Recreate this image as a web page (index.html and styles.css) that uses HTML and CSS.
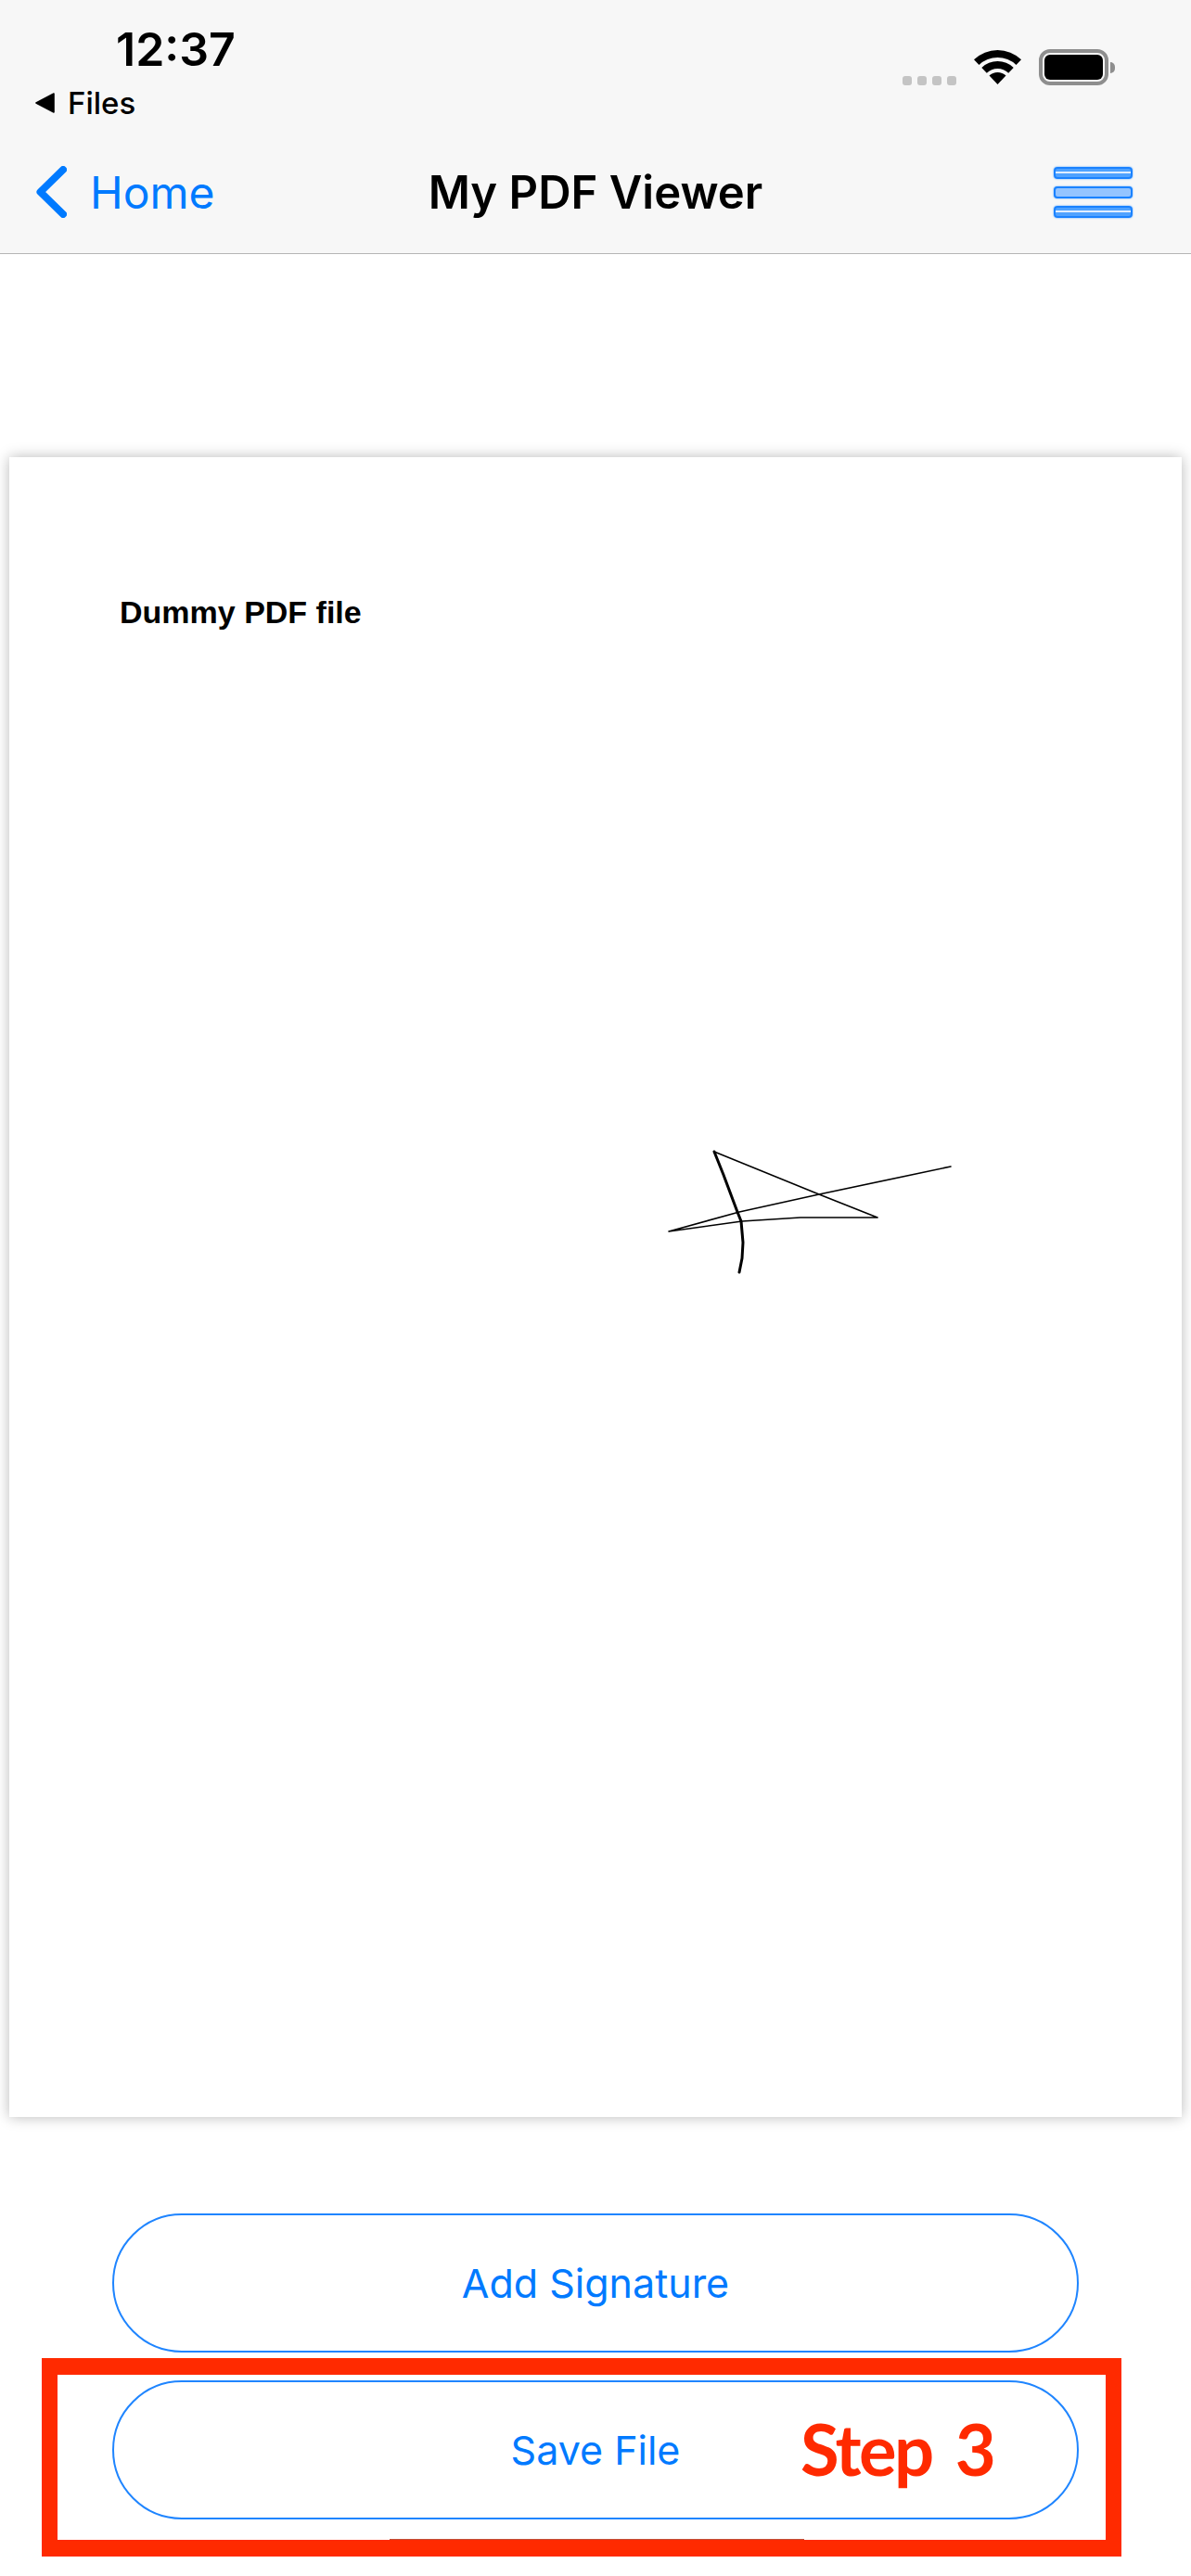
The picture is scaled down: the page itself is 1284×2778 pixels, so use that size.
FILE: index.html
```html
<!DOCTYPE html>
<html lang="en">
<head>
    <meta charset="UTF-8">
    <meta name="viewport" content="width=device-width, initial-scale=1.0">
    <title>My PDF Viewer</title>
    <link rel="stylesheet" href="styles.css">
</head>
<body>
    <header class="header">
        <div class="status">
            <div class="status-left">
                <div class="time">12:37</div>
                <div class="back-app">
                    <svg class="back-arrow" viewBox="0 0 22 22" width="22" height="22"><path d="M20 1 L1 11 L20 21 Z" fill="#000" stroke="#000" stroke-width="1.6" stroke-linejoin="round"/></svg>
                    <span>Files</span>
                </div>
            </div>
            <div class="status-right">
                <div class="signal">
                    <span class="dot"></span><span class="dot"></span><span class="dot"></span><span class="dot"></span>
                </div>
                <svg class="wifi" viewBox="0 0 51 37" width="51" height="37">
                    <path d="M0 10.2 A37 37 0 0 1 51 10.2 L45.5 16 A29 29 0 0 0 5.5 16 Z" fill="#000"/>
                    <path d="M8.3 18.9 A25 25 0 0 1 42.7 18.9 L37.2 24.7 A17 17 0 0 0 13.8 24.7 Z" fill="#000"/>
                    <path d="M16.5 27.6 A13 13 0 0 1 34.5 27.6 L25.5 37 Z" fill="#000"/>
                </svg>
                <div class="battery"><div class="battery-fill"></div></div>
                <div class="battery-nub"></div>
            </div>
        </div>
        <nav class="nav">
            <a class="nav-back">
                <svg class="chevron" viewBox="0 0 33 56" width="33" height="56"><path d="M29 4 L4.5 28 L29 52" fill="none" stroke="#007aff" stroke-width="8" stroke-linecap="round" stroke-linejoin="round"/></svg>
                <span>Home</span>
            </a>
            <h1 class="nav-title">My PDF Viewer</h1>
            <div class="menu">
                <div class="menu-bar menu-bar-light"></div>
                <div class="menu-bar"></div>
                <div class="menu-bar menu-bar-light"></div>
            </div>
        </nav>
    </header>

    <main class="content">
        <div class="pdf-page">
            <p class="pdf-text">Dummy PDF file</p>
            <svg class="signature" viewBox="0 0 320 150" width="320" height="150">
                <!-- thick downward stroke -->
                <path d="M50 2 L60 27 L75 67 L79 77 L81 100 L80 117 L77 132" fill="none" stroke="#000" stroke-width="3" stroke-linecap="round" stroke-linejoin="round"/>
                <!-- thin stroke around the triangle and the long line -->
                <path d="M50 2 L163 48 L226 73 L143 73 L80 77 L1 88 L77 67 L163 48 L305 18" fill="none" stroke="#000" stroke-width="1.6" stroke-linecap="round" stroke-linejoin="round"/>
            </svg>
        </div>

        <div class="actions">
            <button class="action-btn" type="button">Add Signature</button>
            <button class="action-btn" type="button">Save File</button>
            <div class="step-box"></div>
            <div class="step-label">Step 3</div>
        </div>
    </main>
</body>
</html>
```

FILE: styles.css
```css
html, body {
    margin: 0;
    padding: 0;
}
body {
    width: 1284px;
    height: 2778px;
    overflow: hidden;
    background-color: white;
    font-family: Inter, "Noto Sans", sans-serif;
}

/* header */
.header {
    height: 273px;
    background-color: #f7f7f7;
    border-bottom: 1px solid #b4b4b4;
}
.status {
    display: flex;
    justify-content: space-between;
    height: 157px;
    padding: 0 82px 0 38px;
}
.time {
    margin-top: 23px;
    padding-left: 87px;
    font-size: 50px;
    font-weight: 600;
    line-height: 60px;
    color: black;
}
.back-app {
    display: flex;
    align-items: center;
    gap: 13px;
    margin-top: 8px;
    font-size: 33px;
    font-weight: 500;
    line-height: 40px;
    color: black;
}
.status-right {
    display: flex;
    align-items: center;
    height: 39px;
    margin-top: 53px;
}
.signal {
    display: flex;
    gap: 6px;
    margin-top: 28px;
    margin-right: 19px;
}
.dot {
    width: 10px;
    height: 10px;
    border-radius: 3px;
    background-color: #c4c4c4;
}
.wifi {
    margin-right: 19px;
}
.battery {
    box-sizing: border-box;
    width: 75px;
    height: 39px;
    padding: 2px;
    border: 4px solid #8e8e8e;
    border-radius: 12px;
}
.battery-fill {
    height: 100%;
    border-radius: 6px;
    background-color: black;
}
.battery-nub {
    width: 5px;
    height: 12px;
    margin-left: 2px;
    border-radius: 0 6px 6px 0;
    background-color: #8e8e8e;
}

/* nav row */
.nav {
    display: grid;
    grid-template-columns: 1fr auto 1fr;
    align-items: center;
    height: 100px;
    padding: 0 63px;
}
.nav-back {
    display: flex;
    align-items: center;
    gap: 25px;
    margin-left: -24px;
    font-size: 48px;
    color: #007aff;
}
.nav-title {
    margin: 0;
    font-size: 49px;
    font-weight: 600;
    color: black;
    white-space: nowrap;
}
.menu {
    display: flex;
    flex-direction: column;
    gap: 8px;
    justify-self: end;
    width: 85px;
}
.menu-bar {
    box-sizing: border-box;
    height: 13px;
    border-radius: 4px;
    border: 2px solid #1a82ff;
    background-color: #94c4ff;
    box-shadow: 0 0 2px #4a9fff;
}
.menu-bar-light {
    background: linear-gradient(#4fa2ff 0 3px, #e0eeff 3px 5px, #4fa2ff 5px);
}

/* document */
.content {
    padding-top: 219px;
}
.pdf-page {
    position: relative;
    box-sizing: border-box;
    height: 1790px;
    margin: 0 10px;
    padding: 147px 0 0 119px;
    background-color: white;
    box-shadow: 0 0 14px rgba(0, 0, 0, 0.28);
}
.pdf-text {
    margin: 0;
    font-family: "Liberation Sans", Arial, sans-serif;
    font-size: 34px;
    font-weight: bold;
    line-height: 40px;
    color: black;
}
.signature {
    position: absolute;
    left: 710px;
    top: 747px;
}

/* buttons */
.actions {
    position: relative;
    display: flex;
    flex-direction: column;
    gap: 30px;
    margin-top: 104px;
    padding: 0 121px;
}
.action-btn {
    box-sizing: border-box;
    height: 150px;
    padding: 0;
    border: 2px solid #1f85ff;
    border-radius: 75px;
    background-color: white;
    font-family: inherit;
    font-size: 43px;
    color: #007aff;
}
.step-box {
    position: absolute;
    left: 45px;
    top: 156px;
    box-sizing: border-box;
    width: 1164px;
    height: 214px;
    border-style: solid;
    border-color: #ff2a00;
    border-width: 18px 17px;
}
.step-box::after {
    content: "";
    position: absolute;
    left: 358px;
    width: 447px;
    bottom: 0;
    height: 1px;
    background-color: #c0503a;
}
.step-label {
    position: absolute;
    left: 863px;
    top: 208px;
    font-family: Lato, sans-serif;
    font-size: 76px;
    font-weight: 700;
    letter-spacing: -2.5px;
    word-spacing: 9px;
    line-height: 92px;
    color: #ff2a00;
}
```
